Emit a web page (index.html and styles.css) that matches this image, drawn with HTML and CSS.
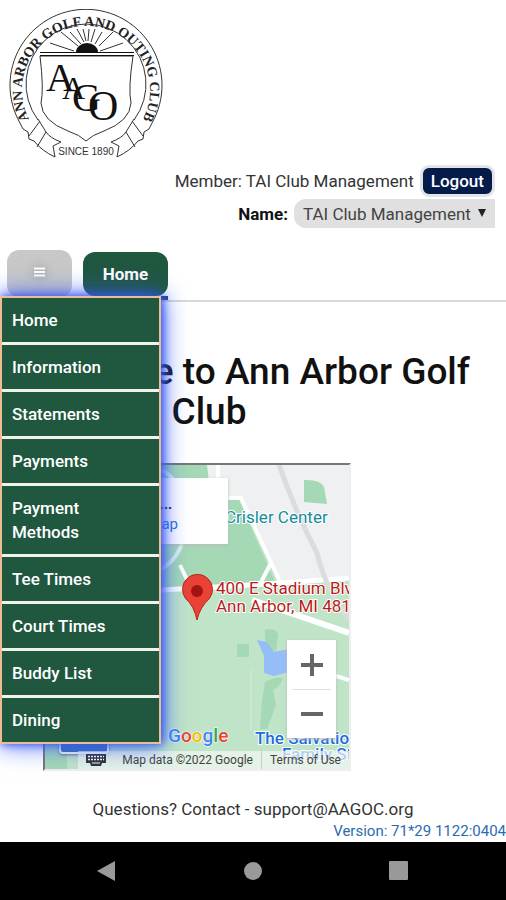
FILE: index.html
```html
<!DOCTYPE html>
<html lang="en">

<head>
    <meta charset="UTF-8">
    <meta name="viewport" content="width=device-width, initial-scale=1.0">
    <title>Ann Arbor Golf and Outing Club</title>
    <link rel="stylesheet" href="styles.css">
</head>

<body>
    <header class="header">
        <svg class="logo" viewBox="0 0 156 156" role="img" aria-label="Ann Arbor Golf and Outing Club">
            <defs>
                <path id="ring" d="M24.500 116 A64 64 0 1 1 131.500 116" />
                <path id="ribbon" d="M12 114 L15 120 L20 123 L21 130 L26 132 Q34 142 47 148 L45 137 L53 133 Q42 129 38 123 L30 110 M32 112 L21 127 M38 123 L29 138" />
            </defs>
            <g fill="none" stroke="#333" stroke-width="1">
                <path d="M12 114 A76 76 0 1 1 144 114" />
                <path d="M30 111 A60 60 0 1 1 126 111" />
                <path d="M32 47 Q36 80 33 94 Q34 112 60 122 Q72 126 78 132 Q84 126 96 122 Q122 112 123 94 Q120 80 125 47 Z" />
                <path d="M32 43.500 H126 M32 46.500 H126" stroke="#111" />
                <path d="M42 34 L66 42 M53 23 L70 37 M62 23 L73 35 M69 20 L76 33 M75 20 L78 32 M81 20 L80 32 M87 20 L83 33 M94 23 L87 35 M105 23 L91 37 M115 34 L92 42" />
                <use href="#ribbon" />
                <use href="#ribbon" transform="translate(156 0) scale(-1 1)" />
            </g>
            <path d="M68 43 A11 9 0 0 1 90 43 Z" fill="#111" />
            <text class="ring-text"><textPath href="#ring" startOffset="50%">ANN ARBOR GOLF AND OUTING CLUB</textPath></text>
            <g class="monogram">
                <text x="38" y="82" font-size="40">A</text>
                <text x="54" y="90" font-size="32">A</text>
                <text x="64" y="102" font-size="40">G</text>
                <text x="80" y="111" font-size="42">O</text>
            </g>
            <text class="since" x="78" y="146">SINCE 1890</text>
        </svg>
        <div class="member">
            <span>Member: TAI Club Management</span>
            <button class="logout" type="button">Logout</button>
        </div>
        <div class="member name">
            <label for="member-name">Name:</label>
            <div class="select-box">
                <select id="member-name">
                    <option>TAI Club Management</option>
                </select>
            </div>
        </div>
    </header>

    <nav class="tabs">
        <button class="toggle" type="button" aria-label="Menu" aria-expanded="true">
            <svg width="12" height="12" viewBox="0 0 12 12"><path d="M0 2.500H11M0 6H11M0 9.500H11" stroke="#fff" stroke-width="2" /></svg>
        </button>
        <div class="tab"><a href="#">Home</a></div>
        <ul class="menu">
            <li><a href="#">Home</a></li>
            <li><a href="#">Information</a></li>
            <li><a href="#">Statements</a></li>
            <li><a href="#">Payments</a></li>
            <li><a href="#">Payment Methods</a></li>
            <li><a href="#">Tee Times</a></li>
            <li><a href="#">Court Times</a></li>
            <li><a href="#">Buddy List</a></li>
            <li><a href="#">Dining</a></li>
        </ul>
    </nav>

    <main class="content">
        <h1>Welcome to Ann Arbor Golf &amp; Outing Club</h1>

        <div class="map">
            <svg class="map-art" viewBox="0 0 304 304">
                <rect width="304" height="304" fill="#bfe4c8" />
                <!-- parking and street blocks -->
                <path d="M100 0 H173 V33 H193 L227 110 L232 120 L100 126 Z" fill="#a5d8b5" />
                <path d="M162 0 H304 V115 L236 119 L198 34 H166 Z" fill="#eef0f1" />
                <path d="M259 15 Q275 14 279 22 L282 39 L259 37 Z" fill="#a5d8b5" />
                <path d="M0 260 H22 V304 H0 Z" fill="#a5d8b5" />
                <g fill="none" stroke="#fff">
                    <path d="M104 0 Q136 8 140 45 Q144 98 104 109" stroke="#dceff0" stroke-width="4" />
                    <path d="M173 0 V33 H196 L236 119 M226 98 L215 119 M135 100 L145 121" stroke-width="4" />
                    <path d="M100 126 Q215 120 304 113" stroke-width="5" />
                    <path d="M207 135 L304 168" stroke-width="6" />
                    <path d="M264 209 L266 203 L304 215" stroke-width="4" />
                    <path d="M206 205 V265" stroke="#cbe9d2" stroke-width="2" />
                </g>
                <path d="M234 0 Q251 48 272 88 Q280 123 304 154" fill="none" stroke="#dadcde" stroke-width="5" />
                <path d="M192 179 H204 V192 H192 Z M220 165 Q231 162 233 170 L231 187 Q220 182 220 173 Z M220 217 Q231 211 238 213 Q235 222 228 225 L231 240 L222 264 H215 L217 236 Z" fill="#a5d8b5" />
                <path d="M212 175 L222 177 L229 187 L244 184 V207 L229 211 L219 208 V191 Z" fill="#95bdf7" />
                <g class="place">
                    <text x="180" y="58" fill="#168c9c">Crisler Center</text>
                    <text x="171" y="129" fill="#b91c20">400 E Stadium Blvd</text>
                    <text x="171" y="147" fill="#b91c20">Ann Arbor, MI 48104</text>
                    <text x="210" y="279" fill="#1b6de0" font-weight="500">The Salvation</text>
                    <text x="237" y="295" fill="#1b6de0" font-weight="500">Family Store</text>
                </g>
                <path d="M152 155 Q149 141 141 134 A15 15 0 1 1 164 134 Q155 142 152 155 Z" fill="#ea4335" stroke="#b9261c" />
                <circle cx="152" cy="126" r="6" fill="#a51312" />
                <text class="brand" x="123" y="277"><tspan fill="#4285f4">G</tspan><tspan fill="#ea4335">o</tspan><tspan fill="#fbbc05">o</tspan><tspan fill="#4285f4">g</tspan><tspan fill="#34a853">l</tspan><tspan fill="#ea4335">e</tspan></text>
            </svg>
            <div class="map-card">
                <b>400 E Stadium ...</b>
                <a href="#">View larger map</a>
            </div>
            <div class="thumb"></div>
            <div class="zoom">
                <button type="button" aria-label="Zoom in"><svg width="22" height="22" viewBox="0 0 22 22"><path d="M0 11H22M11 0V22" stroke="#666" stroke-width="4" /></svg></button>
                <button type="button" aria-label="Zoom out"><svg width="22" height="22" viewBox="0 0 22 22"><path d="M0 11H22" stroke="#666" stroke-width="4" /></svg></button>
            </div>
            <div class="map-footer">
                <button type="button" class="keys" aria-label="Keyboard shortcuts">
                    <svg width="20" height="12" viewBox="0 0 20 12"><path d="M0 0H20V9H16L15 12H5L4 9H0Z" fill="#333" /><path d="M2 2.500H18M2 5.500H18" stroke="#fff" stroke-width="1.500" stroke-dasharray="2 1" /><path d="M6 9H14" stroke="#fff" /></svg>
                </button>
                <span>Map data ©2022 Google</span>
                <a href="#">Terms of Use</a>
            </div>
        </div>
    </main>

    <footer class="footer">
        <p>Questions? Contact - support@AAGOC.org</p>
        <p class="version">Version: 71*29 1122:0404</p>
    </footer>

    <div class="system-bar">
        <button type="button" aria-label="Back"><svg width="22" height="22" viewBox="0 0 22 22"><path d="M1 11L19 1V21Z" fill="#999" /></svg></button>
        <button type="button" aria-label="Home screen"><svg width="22" height="22" viewBox="0 0 22 22"><circle cx="11" cy="11" r="9" fill="#999" /></svg></button>
        <button type="button" aria-label="Recent apps"><svg width="22" height="22" viewBox="0 0 22 22"><rect x="1" y="1" width="19" height="19" rx="1" fill="#999" /></svg></button>
    </div>
</body>

</html>
```
FILE: styles.css
```css
* {
    margin: 0;
    padding: 0;
    box-sizing: border-box;
}

body {
    min-height: 100vh;
    display: flex;
    flex-direction: column;
    background: #fff;
    color: #333;
    font-family: Roboto, "Liberation Sans", sans-serif;
    font-size: 17px;
    line-height: 24px;
    overflow-x: hidden;
}

a {
    color: inherit;
    text-decoration: none;
}

button {
    border: none;
    font-family: inherit;
    cursor: pointer;
}

.header {
    padding: 9px 11px 0 8px;
}

.logo {
    display: block;
    width: 156px;
    height: 156px;
}

.ring-text {
    font: bold 14px "Liberation Serif", serif;
    fill: #222;
    text-anchor: middle;
}

.monogram {
    font-family: "Liberation Serif", serif;
    fill: #111;
}

.since {
    font: 10px "Liberation Sans", sans-serif;
    fill: #333;
    text-anchor: middle;
}

.member {
    display: flex;
    align-items: center;
    justify-content: flex-end;
    gap: 6px;
}

.logout {
    height: 32px;
    padding: 0 8px;
    border: 3px solid #e4e4e8;
    border-radius: 9px;
    background: #051c4b;
    color: #fff;
    font-size: 17px;
    font-weight: 500;
}

.name {
    margin-top: 2px;
}

.name label {
    color: #111;
    font-weight: bold;
}

.select-box {
    position: relative;
}

.select-box::after {
    content: "";
    position: absolute;
    top: 10px;
    right: 9px;
    border: 4px solid transparent;
    border-top: 8px solid #222;
    border-bottom: none;
    pointer-events: none;
}

.select-box select {
    display: block;
    appearance: none;
    height: 29px;
    padding: 0 24px 0 9px;
    border: none;
    border-radius: 12px 0 0 12px;
    background: #e0e0e0;
    color: #444;
    font-family: inherit;
    font-size: 17px;
}

.tabs {
    position: relative;
    display: flex;
    align-items: flex-start;
    gap: 11px;
    margin-top: 22px;
    padding: 0 7px;
    height: 52px;
    border-bottom: 2px solid #d8d8d8;
}

.toggle {
    width: 65px;
    height: 47px;
    border-radius: 12px;
    background: #c8c8c8;
}

.toggle svg {
    filter: drop-shadow(0 0 5px #888);
}

.tab {
    padding-top: 2px;
    border-bottom: 4px solid #174783;
}

.tab a {
    display: block;
    width: 85px;
    border-radius: 12px;
    background: #20573f;
    color: #fff;
    font-weight: bold;
    line-height: 44px;
    text-align: center;
}

.menu {
    position: absolute;
    z-index: 2;
    top: 46px;
    left: 0;
    width: 161px;
    border: 2px solid #edbd94;
    background: #20573f;
    box-shadow: 0 0 24px #3458f5, 2px 0 8px #3458f5;
    list-style: none;
}

.menu li + li {
    border-top: 3px solid #f1f3ea;
}

.menu a {
    display: block;
    padding: 10px;
    color: #fff;
    font-weight: 500;
}

.content h1 {
    padding: 50px 20px 0;
    color: #111;
    font-size: 37px;
    font-weight: 500;
    line-height: 40px;
}

.map {
    position: relative;
    width: 308px;
    height: 308px;
    margin: 31px 0 0 43px;
    border: 2px solid;
    border-color: #777 #eee #eee #777;
    overflow: hidden;
}

.map-art {
    display: block;
    width: 100%;
}

.place text {
    font-size: 17px;
    paint-order: stroke;
    stroke: #fff;
    stroke-width: 2px;
}

.brand {
    font-size: 19px;
    font-weight: 500;
    paint-order: stroke;
    stroke: #fff;
    stroke-width: 1px;
}

.map-card {
    position: absolute;
    top: 13px;
    left: 10px;
    width: 173px;
    height: 66px;
    padding: 16px 50px 0 8px;
    background: #fff;
    box-shadow: 0 1px 3px #bbb;
    color: #111;
    font-size: 14px;
    line-height: 20px;
    text-align: right;
    white-space: nowrap;
}

.map-card b,
.map-card a {
    display: block;
}

.map-card b {
    padding-right: 6px;
}

.map-card a {
    color: #2676dc;
    font-size: 15px;
}

.thumb {
    position: absolute;
    left: 14px;
    bottom: 15px;
    width: 50px;
    height: 50px;
    border: 2px solid #fff;
    border-radius: 4px;
    background: #3b75ac;
    box-shadow: 0 1px 3px #777;
}

.zoom {
    position: absolute;
    right: 13px;
    bottom: 31px;
    width: 49px;
    padding: 0 5px;
    background: #fff;
    box-shadow: 0 1px 3px #bbb;
}

.zoom button {
    display: flex;
    align-items: center;
    justify-content: center;
    width: 100%;
    height: 49px;
    background: none;
}

.zoom button + button {
    border-top: 1px solid #e0e0e0;
}

.map-footer {
    position: absolute;
    right: 0;
    bottom: 0;
    display: flex;
    align-items: center;
    height: 18px;
    background: rgba(244, 248, 244, 0.7);
    color: #444;
    font-size: 12px;
    white-space: nowrap;
}

.map-footer > * {
    padding: 0 8px;
}

.map-footer .keys {
    display: flex;
    background: none;
}

.map-footer a {
    border-left: 1px solid #ccc;
}

.footer {
    padding-top: 26px;
    text-align: center;
}

.version {
    color: #2b6cb0;
    font-size: 15px;
    line-height: 20px;
    text-align: right;
}

.system-bar {
    display: flex;
    align-items: center;
    justify-content: space-around;
    height: 58px;
    margin-top: auto;
    padding: 0 34px;
    background: #000;
}

.system-bar button {
    display: flex;
    background: none;
}
```
